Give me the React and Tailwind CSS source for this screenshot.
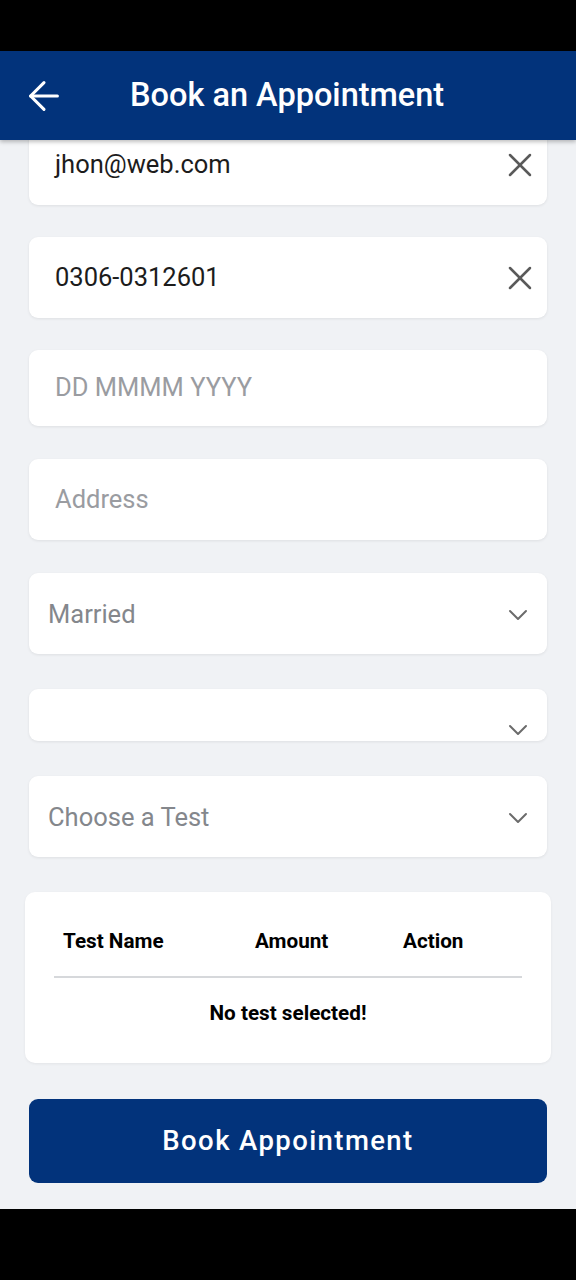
import React from "react";
import { ArrowLeft, X, ChevronDown } from "lucide-react";

const font = { fontFamily: "Roboto, 'Noto Sans', sans-serif" };

const Card = ({ className = "", children }) => (
  <div
    className={`mx-[29px] flex items-center rounded-[9px] bg-white shadow-[0_1px_3px_rgba(0,0,0,0.08)] ${className}`}
  >
    {children}
  </div>
);

const TextField = ({ value, placeholder, clear, className }) => (
  <Card className={className}>
    <div
      className={`flex-1 pl-[26px] text-[25.5px] leading-none ${
        value ? "text-[#1c1c1c]" : "text-[#9a9ca1]"
      }`}
    >
      {value || placeholder}
    </div>
    {clear && (
      <X className="mr-[7px] text-[#5a5a5a]" size={40} strokeWidth={1.5} />
    )}
  </Card>
);

const SelectField = ({ placeholder, className, chevronClass = "" }) => (
  <Card className={className}>
    <div className="flex-1 pl-[19px] text-[25.5px] leading-none text-[#84878c]">
      {placeholder}
    </div>
    <ChevronDown
      className={`mr-[13px] text-[#6b6b6b] ${chevronClass}`}
      size={32}
      strokeWidth={1.5}
    />
  </Card>
);

export default function App() {
  return (
    <div className="flex h-[1280px] w-[576px] flex-col bg-black" style={font}>
      {/* status bar */}
      <div className="h-[51px] shrink-0 bg-black" />

      {/* header */}
      <div className="relative z-10 flex h-[89px] shrink-0 items-center bg-[#02337b] shadow-[0_2px_4px_rgba(0,0,0,0.25)]">
        <ArrowLeft className="ml-[21px] text-white" size={46} strokeWidth={1.6} />
        <div className="ml-[63px] text-[32.5px] font-medium leading-none text-white">
          Book an Appointment
        </div>
      </div>

      {/* form */}
      <div className="h-[1069px] shrink-0 overflow-hidden bg-[#f0f2f5]">
        <TextField value="jhon@web.com" clear className="mt-[-16px] h-[81px]" />
        <TextField value="0306-0312601" clear className="mt-[32px] h-[81px]" />
        <TextField placeholder="DD MMMM YYYY" className="mt-[32px] h-[76px]" />
        <TextField placeholder="Address" className="mt-[33px] h-[81px]" />
        <SelectField placeholder="Married" className="mt-[33px] h-[81px] pt-[3px]" />
        <SelectField
          placeholder=""
          className="mt-[35px] h-[52px] items-end"
          chevronClass="mb-[-5px]"
        />
        <SelectField placeholder="Choose a Test" className="mt-[35px] h-[81px] pt-[3px]" />

        {/* selected tests table */}
        <div className="mx-[25px] mt-[35px] h-[171px] rounded-[10px] bg-white px-[29px] pt-[37px] shadow-[0_1px_3px_rgba(0,0,0,0.06)]">
          <div className="grid grid-cols-[192px_148px_1fr] pb-[23px] text-[20.7px] font-bold leading-[24px] text-black">
            <div className="pl-[9px]">Test Name</div>
            <div className="pl-[9px]">Amount</div>
            <div className="pl-[9px]">Action</div>
          </div>
          <div className="h-[2px] bg-[#d6d8db]" />
          <div className="pt-[23px] text-center text-[20.7px] font-bold leading-[24px] text-black">
            No test selected!
          </div>
        </div>

        <button className="mx-[29px] mt-[36px] flex h-[84px] w-[518px] items-center justify-center rounded-[9px] bg-[#02337b] text-[27.5px] font-medium tracking-[1.4px] text-white">
          Book Appointment
        </button>
      </div>

      {/* nav bar */}
      <div className="flex-1 bg-black" />
    </div>
  );
}
